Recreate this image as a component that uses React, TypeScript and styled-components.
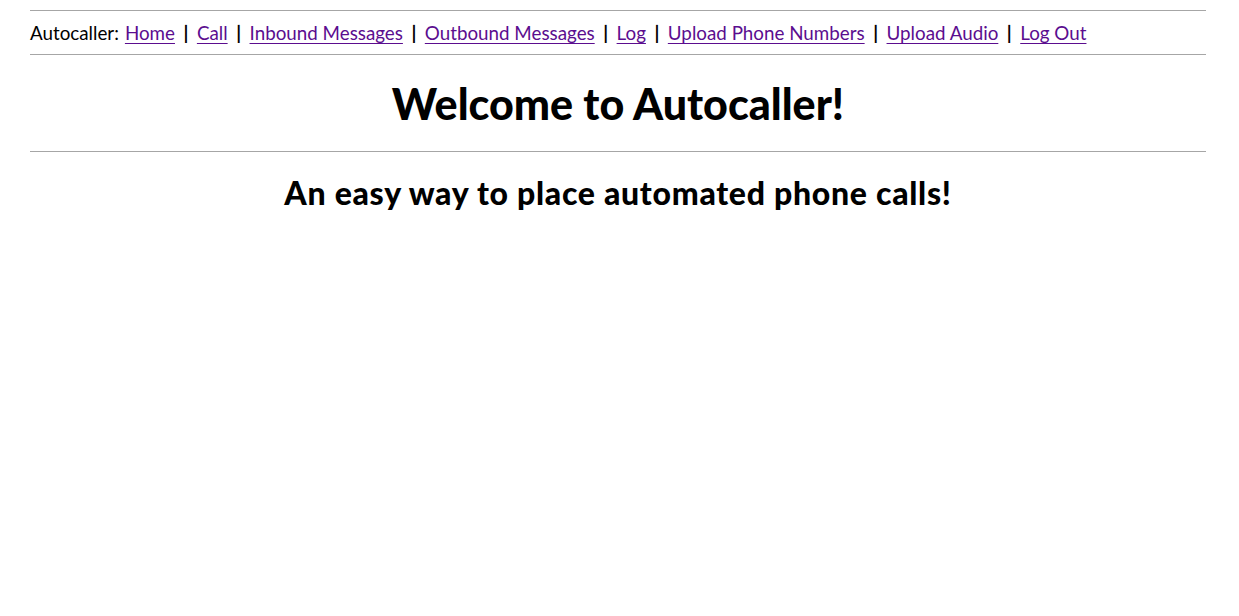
import React from "react";
import styled, { createGlobalStyle } from "styled-components";

const Global = createGlobalStyle`
  html, body { margin: 0; padding: 0; background: #fff; }
  body { font-family: "Lato", "Liberation Sans", sans-serif; color: #000; }
`;

const Page = styled.div`
  width: 1176px;
  margin-left: 30px;
  padding-top: 10px;
`;

const Rule = styled.hr`
  border: 0;
  height: 1px;
  background: #a6a6a6;
  margin: 0;
`;

const Nav = styled.nav`
  height: 43px;
  display: flex;
  align-items: center;
  font-size: 18.8px;
  white-space: pre;
`;

const Label = styled.span`
  margin-right: 6px;
`;

const Separator = styled.span`
  margin: 0 8.5px;
  font-weight: 700;
`;

const Link = styled.a`
  color: #5b0d8f;
  text-decoration: underline;
  text-underline-offset: 3px;
`;

const TitleBlock = styled.div`
  height: 96px;
  display: flex;
  align-items: center;
  justify-content: center;
`;

const Title = styled.h1`
  margin: 0;
  font-size: 43px;
  font-weight: 900;
`;

const Subtitle = styled.h2`
  margin: 21px 0 0;
  text-align: center;
  font-size: 32px;
  letter-spacing: 0.7px;
  font-weight: 900;
`;

const links = ["Home", "Call", "Inbound Messages", "Outbound Messages", "Log", "Upload Phone Numbers", "Upload Audio", "Log Out"];

export default function App() {
  return (
    <>
      <Global />
      <Page>
        <Rule />
        <Nav>
          <Label>Autocaller:</Label>
          {links.map((l, i) => (
            <React.Fragment key={l}>
              {i > 0 && <Separator>|</Separator>}
              <Link href="#">{l}</Link>
            </React.Fragment>
          ))}
        </Nav>
        <Rule />
        <TitleBlock>
          <Title>Welcome to Autocaller!</Title>
        </TitleBlock>
        <Rule />
        <Subtitle>An easy way to place automated phone calls!</Subtitle>
      </Page>
    </>
  );
}
